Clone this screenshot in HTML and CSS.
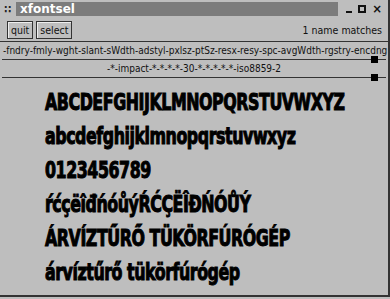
FILE: index.html
```html
<!DOCTYPE html>
<html lang="en">
<head>
  <meta charset="UTF-8">
  <title>xfontsel</title>
  <link rel="stylesheet" href="styles.css">
</head>
<body>
  <div class="window">

    <!-- Title bar -->
    <div class="titlebar">
      <span class="grip">&#8759;</span>
      <div class="title">xfontsel</div>
      <div class="controls">
        <span class="ctl-min"></span>
        <span class="ctl-max"></span>
        <span class="ctl-close">&#215;</span>
      </div>
    </div>

    <!-- Command row -->
    <div class="commands">
      <button class="cmd">quit</button>
      <button class="cmd">select</button>
      <span class="count">1 name matches</span>
    </div>

    <div class="field-names">-fndry-fmly-wght-slant-sWdth-adstyl-pxlsz-ptSz-resx-resy-spc-avgWdth-rgstry-encdng</div>
    <div class="rule"><span class="knob"></span></div>
    <div class="pattern">-*-impact-*-*-*-*-30-*-*-*-*-*-iso8859-2</div>
    <div class="rule"><span class="knob"></span></div>

    <!-- Sample text -->
    <div class="sample">
      <div class="line">ABCDEFGHIJKLMNOPQRSTUVWXYZ</div>
      <div class="line">abcdefghijklmnopqrstuvwxyz</div>
      <div class="line">0123456789</div>
      <div class="line">ŕćçëîđńóůýŔĆÇËÎĐŃÓŮÝ</div>
      <div class="line">ÁRVÍZTŰRŐ TÜKÖRFÚRÓGÉP</div>
      <div class="line">árvíztűrő tükörfúrógép</div>
    </div>

  </div>
</body>
</html>
```

FILE: styles.css
```css
html, body {
  margin: 0;
  height: 100%;
}
body {
  background-color: #bebebe;
  font-family: 'DejaVu Sans Condensed', 'DejaVu Sans', sans-serif;
  font-size: 10px;
  color: #111;
}
.window {
  height: 297px;
  border-right: 2px solid #333;
  border-bottom: 2px solid #333;
  box-sizing: border-box;
  width: 390px;
  display: flex;
  flex-direction: column;
}
.titlebar {
  display: flex;
  align-items: center;
  height: 16px;
  padding-top: 1px;
}
.grip {
  width: 16px;
  text-align: center;
  font-size: 11px;
  font-weight: bold;
  color: #222;
}
.title {
  flex: 1;
  height: 14px;
  line-height: 14px;
  background-color: #7c7c7c;
  color: #fff;
  font-family: 'DejaVu Sans', sans-serif;
  font-weight: bold;
  font-size: 12px;
  padding-left: 4px;
}
.controls {
  display: flex;
  align-items: center;
  gap: 6px;
  padding: 0 6px 0 8px;
}
.ctl-min {
  width: 6px;
  height: 2px;
  margin-top: 6px;
  background-color: #111;
}
.ctl-max {
  width: 4px;
  height: 4px;
  border: 2px solid #111;
}
.ctl-close {
  font-size: 13px;
  font-weight: bold;
  line-height: 10px;
}
.commands {
  display: flex;
  align-items: center;
  gap: 3px;
  padding: 3px 6px 0 7px;
  height: 19px;
}
.cmd {
  font-family: 'DejaVu Sans Condensed', 'DejaVu Sans', sans-serif;
  font-size: 10.5px;
  background-color: #bebebe;
  color: #111;
  border: 1px solid #333;
  box-shadow: inset 1px 1px 0 #eee;
  padding: 1px 3px;
  height: 18px;
  margin: 0;
}
.count {
  margin-left: auto;
  font-size: 10.5px;
}
.field-names {
  margin-top: 2px;
  border-top: 1px solid #333;
  padding: 3px 0 3px 3px;
  white-space: nowrap;
}
.rule {
  position: relative;
  height: 1px;
  margin: 0 2px;
  background-color: #333;
}
.knob {
  position: absolute;
  right: 8px;
  top: -3px;
  width: 7px;
  height: 7px;
  background-color: #000;
}
.pattern {
  text-align: center;
  padding: 3px 0;
}
.sample {
  padding: 9px 0 0 45px;
  font-weight: bold;
  font-size: 23px;
  color: #000;
}
.line {
  height: 34px;
  line-height: 30px;
  white-space: nowrap;
  transform: scaleX(0.767);
  transform-origin: left center;
  letter-spacing: -0.6px;
  -webkit-text-stroke: 1px #000;
}
```
